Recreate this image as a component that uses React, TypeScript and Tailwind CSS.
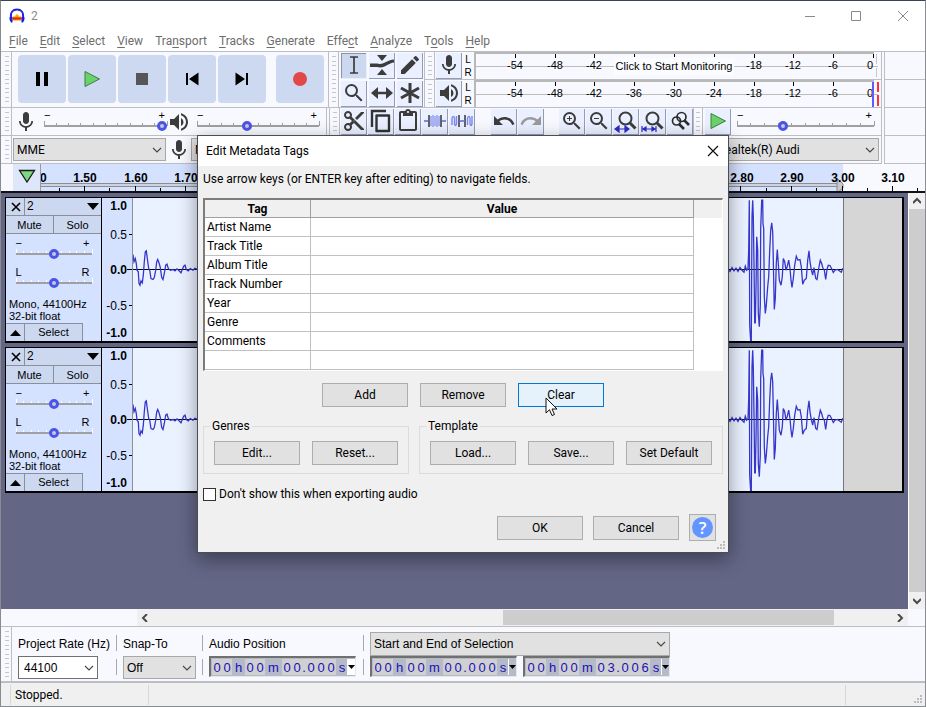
import React from "react";
import {
  MdMic, MdVolumeUp, MdEdit, MdContentCut, MdContentPaste,
  MdUndo, MdRedo, MdZoomIn, MdZoomOut, MdSearch,
} from "react-icons/md";

const ARIAL = "font-['Liberation_Sans',Arial,sans-serif]";

function Chevron() {
  return (
    <svg className="pointer-events-none absolute right-1 top-1/2 -translate-y-1/2" width="10" height="6" viewBox="0 0 10 6">
      <path d="M1 1l4 4 4-4" fill="none" stroke="#444" strokeWidth="1.1" />
    </svg>
  );
}

function Dropdown({ label, value, box, look }: { label: string; value: string; box: string; look: string }) {
  return (
    <div className={`relative ${box}`}>
      <select aria-label={label} className={`h-full w-full appearance-none overflow-hidden border outline-none ${look}`}>
        <option>{value}</option>
      </select>
      <Chevron />
    </div>
  );
}

function Grabber({ box = "" }: { box?: string }) {
  return (
    <div className={`flex w-[10px] shrink-0 justify-center border-r border-[#bcbec4] py-1 ${box}`}>
      <div className="w-1 bg-[repeating-linear-gradient(#c4c6cc_0_1px,transparent_1px_5px,#c4c6cc_5px_6px,transparent_6px_9px)]" />
    </div>
  );
}

function ToolButton({ label, active = false, dim = false, children }: { label: string; active?: boolean; dim?: boolean; children: React.ReactNode }) {
  return (
    <button
      aria-label={label}
      className={`flex h-[26px] w-[26px] shrink-0 items-center justify-center overflow-hidden border-b border-r ${
        active ? "border-[#e8eefc] bg-[#ccd8f0] shadow-[inset_1px_1px_0_#8c94ac]" : "border-[#949cb4] bg-[#eaf0ff]"
      } ${dim ? "text-[#9a9a9a]" : "text-[#3c3c3c]"}`}
    >
      {children}
    </button>
  );
}

const THUMB =
  "[&::-webkit-slider-thumb]:h-[10px] [&::-webkit-slider-thumb]:w-[10px] [&::-webkit-slider-thumb]:appearance-none [&::-webkit-slider-thumb]:rounded-full [&::-webkit-slider-thumb]:border-[3px] [&::-webkit-slider-thumb]:border-[#4a55e8] [&::-webkit-slider-thumb]:bg-[#c8c8d8]";

function Slider({ label, value, box, left = "−", right = "+", tick = "#a0a0a0" }: { label: string; value: number; box: string; left?: string; right?: string; tick?: string }) {
  return (
    <div className={`${box} ${ARIAL} text-[11px] leading-[9px] text-black`}>
      <div className="flex justify-between pr-0.5">
        <span>{left}</span>
        <span>{right}</span>
      </div>
      <div className="relative flex h-3 items-center">
        <svg className="absolute inset-0 h-full w-full overflow-visible" shapeRendering="crispEdges">
          {[0, 10, 20, 30, 40, 50, 60, 70, 80, 90, 100].map((p) => (
            <line key={p} x1={`${p}%`} x2={`${p}%`} y1={p % 100 === 0 ? 1 : 3} y2="6" stroke={tick} />
          ))}
          <line x1="0" x2="100%" y1="6" y2="6" stroke="#a0a0a0" strokeWidth="2" />
        </svg>
        <input type="range" aria-label={label} defaultValue={value} className={`absolute inset-x-0 top-0 h-[11px] w-full appearance-none bg-transparent ${THUMB}`} />
      </div>
    </div>
  );
}

function PlayShape({ size }: { size: number }) {
  return (
    <svg width={size} height={size} viewBox="0 0 18 18">
      <path d="M2 1.5L16.5 9 2 16.5z" fill="#6bd26b" stroke="#3f7f45" strokeWidth="1" />
    </svg>
  );
}

function TransportButton({ label, children }: { label: string; children: React.ReactNode }) {
  return (
    <button aria-label={label} className="flex h-12 w-12 items-center justify-center rounded bg-[#ccd9f1] text-black">
      {children}
    </button>
  );
}

function Transport() {
  return (
    <div className="flex h-14 border-b border-r border-[#bcbec4]">
      <Grabber box="ml-px" />
      <div className="flex items-start gap-0.5 pl-1.5 pr-1 pt-[3px]">
        <TransportButton label="Pause">
          <svg width="14" height="16"><path d="M1 1h4v14H1zM9 1h4v14H9z" /></svg>
        </TransportButton>
        <TransportButton label="Play"><PlayShape size={18} /></TransportButton>
        <TransportButton label="Stop">
          <svg width="14" height="14"><rect x="1" y="1" width="12" height="12" fill="#565656" /></svg>
        </TransportButton>
        <TransportButton label="Skip to Start">
          <svg width="14" height="14"><path d="M1 1h2v12H1zM13.500 .5v13L4 7z" /></svg>
        </TransportButton>
        <TransportButton label="Skip to End">
          <svg width="14" height="14"><path d="M11 1h2v12h-2zM.5 .5v13L10 7z" /></svg>
        </TransportButton>
        <div className="w-1.5" />
        <TransportButton label="Record">
          <svg width="16" height="16"><circle cx="8" cy="8" r="7" fill="#e24848" /></svg>
        </TransportButton>
      </div>
    </div>
  );
}

function Tools() {
  return (
    <div className="flex h-14 border-b border-r border-[#bcbec4]">
      <Grabber />
      <div className="grid grid-cols-3 content-center gap-x-0.5 gap-y-0.5 pl-0.5 pr-px">
        <ToolButton label="Selection Tool" active>
          <svg width="14" height="20"><path d="M3 2h3.500L7 3l.5-1H11M7 3v14M3 18h3.500L7 17l.5 1H11" fill="none" stroke="#3c3c3c" strokeWidth="1.700" /></svg>
        </ToolButton>
        <ToolButton label="Envelope Tool">
          <svg width="24" height="22" fill="#3c3c3c"><path d="M7 1h10l-5 6zM7 21h10l-5-6zM0 9.500h7c7 2 10-4 17-4v3C18 9 15 15 7 13H0z" /></svg>
        </ToolButton>
        <ToolButton label="Draw Tool"><MdEdit size={24} className="shrink-0" /></ToolButton>
        <ToolButton label="Zoom Tool"><MdSearch size={24} className="shrink-0" /></ToolButton>
        <ToolButton label="Time Shift Tool">
          <svg width="22" height="14" fill="#3c3c3c"><path d="M0 7l7-6v4.700h8V1l7 6-7 6V8.300H7V13z" /></svg>
        </ToolButton>
        <ToolButton label="Multi Tool">
          <svg width="22" height="22"><path d="M11 1v20M2 6l18 10M20 6L2 16" stroke="#3c3c3c" strokeWidth="3" /></svg>
        </ToolButton>
      </div>
    </div>
  );
}

const DB_MARKS: [string, number][] = [
  ["-54", 41], ["-48", 81], ["-42", 120], ["-36", 160], ["-30", 200],
  ["-24", 240], ["-18", 280], ["-12", 319], ["-6", 359], ["0", 396],
];

function Meter({ label, icon, monitoring = false }: { label: string; icon: React.ReactNode; monitoring?: boolean }) {
  return (
    <div className="flex h-7 border-b border-[#bcbec4]">
      <Grabber />
      <div className="flex items-center pl-px"><ToolButton label={label}>{icon}</ToolButton></div>
      <div className={`flex w-3 flex-col items-center justify-center text-[10px] leading-[13px] ${ARIAL}`}>
        <span>L</span>
        <span>R</span>
      </div>
      <svg className={`h-[27px] min-w-0 flex-1 ${ARIAL} text-[11px]`} shapeRendering="crispEdges">
        <path d="M0 1H400M.5 0V27" stroke="#b8b8b8" strokeWidth="2" fill="none" />
        <path d="M0 14.500H404" stroke="#bdbdbd" fill="none" />
        {DB_MARKS.filter(([, x]) => !monitoring || x < 140 || x > 260).map(([t, x]) => (
          <g key={t}>
            <path d={`M${t === "0" ? 399 : x}.5 2v4`} stroke="#000" />
            <text x={x} y="17" textAnchor="middle">{t}</text>
          </g>
        ))}
        {monitoring ? (
          <>
            <path d="M160.500 2v3M200.500 2v3M240.500 2v3" stroke="#000" />
            <rect x="140" y="6" width="120" height="17" fill="#fbfcff" />
            <text x="200" y="18" textAnchor="middle">Click to Start Monitoring</text>
            <path d="M402.500 2v10M402.500 16v9" stroke="#c6c6c6" />
          </>
        ) : (
          <>
            <path d="M399 2v25" stroke="#5c5cff" strokeWidth="2" />
            <path d="M404 2v10M404 15v11" stroke="#ff3030" strokeWidth="2" />
          </>
        )}
      </svg>
    </div>
  );
}

function Mixer() {
  return (
    <div className="flex h-7 w-[329px] shrink-0 border-b border-r border-[#bcbec4] pr-0.5">
      <Grabber box="ml-px" />
      <div className="flex flex-1 items-center border-r border-[#bcbec4] pl-0.5 text-[#3c3c3c]">
        <MdMic size={24} className="shrink-0" />
        <Slider label="Recording Volume" value={100} box="ml-1.5 w-[123px]" />
        <MdVolumeUp size={24} className="shrink-0" />
        <Slider label="Playback Volume" value={40} box="ml-1.5 w-[122px]" />
      </div>
    </div>
  );
}

function LensWith({ children }: { children: React.ReactNode }) {
  return (
    <svg width="24" height="24" viewBox="0 0 24 24" className="shrink-0">
      <circle cx="11.500" cy="9.500" r="6" fill="none" stroke="#3c3c3c" strokeWidth="2" />
      <path d="M15.500 13.500l6 6" stroke="#3c3c3c" strokeWidth="3" />
      {children}
    </svg>
  );
}

function EditBar() {
  return (
    <div className="flex h-7 flex-1 items-center border-b border-[#bcbec4]">
      <Grabber box="h-full" />
      <div className="ml-px flex gap-px">
        <ToolButton label="Cut"><MdContentCut size={24} className="shrink-0" /></ToolButton>
        <ToolButton label="Copy">
          <svg width="24" height="24" className="shrink-0" fill="none" stroke="#333" strokeWidth="2.400"><path d="M3 18V2h14" /><path d="M7.500 6.500h12.500v15.500H7.500z" strokeLinejoin="round" /></svg>
        </ToolButton>
        <ToolButton label="Paste"><MdContentPaste size={24} className="shrink-0" /></ToolButton>
        <ToolButton label="Trim Audio">
          <svg width="22" height="16" fill="none"><path d="M0 8h4M18 8h4" stroke="#5b68dc" strokeWidth="1.500" /><path d="M5 2v12M17 2v12" stroke="#555" strokeWidth="1.800" /><path d="M7 3v10M9 2v12M11 3v10M13 2v12M15 3v10" stroke="#8792ee" strokeWidth="1.300" /></svg>
        </ToolButton>
        <ToolButton label="Silence Audio">
          <svg width="24" height="16" fill="none" className="shrink-0"><path d="M2 12V5q1.500-3 2.500 0v6q1 3 2 0V3M17.500 12V5q1.500-3 2.500 0v6q1 3 2 0V3" stroke="#7c88ee" strokeWidth="1.400" /><path d="M9 2v12M15 2v12" stroke="#555" strokeWidth="1.800" /><path d="M9 8h6" stroke="#5b68dc" strokeWidth="1.500" /></svg>
        </ToolButton>
      </div>
      <div className="ml-4 flex gap-px">
        <ToolButton label="Undo"><MdUndo size={24} className="shrink-0" /></ToolButton>
        <ToolButton label="Redo" dim><MdRedo size={24} className="shrink-0" /></ToolButton>
      </div>
      <div className="ml-[15px] flex gap-px">
        <ToolButton label="Zoom In"><MdZoomIn size={24} className="shrink-0" /></ToolButton>
        <ToolButton label="Zoom Out"><MdZoomOut size={24} className="shrink-0" /></ToolButton>
        <ToolButton label="Fit Selection">
          <LensWith><path d="M1 20h14M5 17l-4 3 4 3zM11 17l4 3-4 3z" fill="#2c2cc8" stroke="#2c2cc8" strokeWidth="1.200" /></LensWith>
        </ToolButton>
        <ToolButton label="Fit Project">
          <LensWith><path d="M1 17v6M15 17v6M2 20h12M5 18l-3 2 3 2zM11 18l3 2-3 2z" fill="#2c2cc8" stroke="#2c2cc8" strokeWidth="1.200" /></LensWith>
        </ToolButton>
        <ToolButton label="Zoom Toggle">
          <svg width="24" height="24" fill="none" stroke="#2c2c2c" className="shrink-0"><circle cx="8.500" cy="12" r="4" strokeWidth="1.700" /><circle cx="13.500" cy="8" r="4.500" strokeWidth="1.700" /><path d="M11 15l5 5M16 11l5 5" strokeWidth="2.600" /></svg>
        </ToolButton>
      </div>
      <Grabber box="h-full border-l border-l-[#bcbec4]" />
      <div className="ml-0.5"><ToolButton label="Play-at-Speed"><PlayShape size={18} /></ToolButton></div>
      <Slider label="Playback Speed" value={32} box="ml-1.5 w-[137px]" />
    </div>
  );
}

function DeviceBar() {
  return (
    <div className="flex h-7 items-center border-b border-[#bcbec4]">
      <Grabber box="ml-px h-full" />
      <Dropdown label="Audio Host" value="MME" box="ml-px h-[23px] w-[153px]" look="border-[#a8a8a8] bg-[#e1e1e1] pl-[3px] text-black" />
      <MdMic size={24} className="ml-px shrink-0 text-[#3c3c3c]" />
      <Dropdown label="Recording Device" value="Microphone (Realtek(R) Audi" box="h-[23px] flex-1" look="border-[#a8a8a8] bg-[#e1e1e1] pl-[3px] text-black" />
      <MdVolumeUp size={24} className="mx-0.5 shrink-0 text-[#3c3c3c]" />
      <Dropdown label="Playback Device" value="Speakers (Realtek(R) Audi" box="mr-0.5 h-[23px] w-[222px]" look="border-[#a8a8a8] bg-[#e1e1e1] pl-[3px] text-black" />
    </div>
  );
}

const rulerX = (t: number) => Math.round((t - 1.5) * 505) + 43;
const RULER = Array.from({ length: 35 }, (_, i) => 1.45 + i * 0.05);
const LABELS: [string, number][] = [
  ["1.50", 44], ["1.60", 95], ["1.70", 145], ["2.80", 701], ["2.90", 751], ["3.00", 802], ["3.10", 852],
];

function TimeRuler() {
  return (
    <div className="flex h-[29px] border-b-2 border-[#111]">
      <div className="w-3" />
      <button aria-label="Pinned play head" className="flex w-7 items-center justify-center border-r border-[#9a9a9a] bg-[#dde6fb] pb-1">
        <svg width="18" height="14"><path d="M1.500 1.500h15L9 13z" fill="#7ed87e" stroke="#1a1a1a" strokeWidth="1.300" /></svg>
      </button>
      <svg className={`h-full min-w-0 flex-1 text-[12px] font-bold ${ARIAL}`}>
        <rect width="802" height="27" fill="#d4e1ff" />
        <rect x="-2" y="19.500" width="800" height="3" fill="#d0d4dc" stroke="#8a8d94" />
        <path d="M796 14l6 6v4l-6 5z" fill="#c8c8c8" stroke="#888" />
        <text x="-1" y="18">0</text>
        {RULER.map((t, i) => (
          <path key={i} d={`M${rulerX(t)}.5 ${i % 2 ? 22 : 24}V27`} stroke="#000" />
        ))}
        {LABELS.map(([t, x]) => (
          <text key={t} x={x} y="18" textAnchor="middle">{t}</text>
        ))}
      </svg>
    </div>
  );
}

// Vertices of the two hits in the clip, as x,y pairs in thirds of a pixel.
const HIT_A =
  "0,193 3,215 7,205 10,220 12,240 16,245 18,280 21,285 24,272 28,278 31,255 34,215 37,185 40,182 43,205 47,235 50,240 54,265 60,268 64,262 68,240 71,215 74,208 78,218 82,232 86,262 90,268 94,250 98,225 102,222 106,235 112,240 120,238 126,242 132,236 138,242 144,248 148,238 152,228 156,225 160,238 166,242 172,235 180,240 186,234 194,238 1780,238";
const HIT_B =
  "84,268 90,274 96,262 102,272 108,264 114,274 120,262 126,270 132,276 136,258 140,270 144,266 146,208 148,60 149,435 152,484 154,484 156,110 158,60 160,110 162,250 164,428 166,428 168,325 170,170 173,210 175,400 178,440 181,375 182,145 185,60 188,60 189,130 191,145 193,350 196,400 199,375 203,320 206,290 209,210 212,150 215,128 218,155 220,240 223,388 226,355 229,250 232,208 235,250 238,300 243,315 247,290 250,235 254,245 258,270 262,258 266,240 270,265 273,300 276,322 280,295 284,255 289,228 294,240 300,238 304,260 308,312 313,300 319,295 323,240 327,212 330,245 334,268 338,285 342,262 347,295 351,298 356,265 361,240 365,250 368,262 373,270 377,298 381,268 385,255 390,256 396,268 400,277 405,270 412,268 418,272 424,276 428,264";

const scale = (pts: string, dx: number, mid: number) =>
  pts.split(" ").map((p) => {
    const [x, y] = p.split(",").map(Number);
    return `${(x / 3 + dx).toFixed(1)},${((y - mid) / 3 + 71.5).toFixed(1)}`;
  }).join(" ");
const WAVE = `${scale(HIT_A, 0, 238)} ${scale(HIT_B, 567, 268)}`;

function Track() {
  const cell = "border-[#8b8f9c] bg-[#ccd8f0]";
  return (
    <div className={`flex h-[146px] border border-b-2 border-r-2 border-black ${ARIAL} text-[12px] text-black`}>
      <div className="flex w-24 shrink-0 flex-col border-r border-black bg-[#d4e1ff]">
        <div className="flex h-[18px] border-b border-[#8b8f9c]">
          <button aria-label="Close track" className={`flex w-[19px] items-center justify-center border-r pl-px ${cell}`}>
            <svg width="10" height="10"><path d="M1 1l8 8M9 1L1 9" stroke="#000" strokeWidth="1.600" /></svg>
          </button>
          <button className="flex flex-1 items-center justify-between bg-[#ccd8f0] px-0.5 leading-[17px]">
            2
            <svg width="12" height="7"><path d="M0 0h12L6 7z" /></svg>
          </button>
        </div>
        <div className="flex h-[18px] border-b border-[#8b8f9c] text-[11px] leading-[18px]">
          <button className={`flex-1 border-r ${cell}`}>Mute</button>
          <button className={`flex-1 ${cell}`}>Solo</button>
        </div>
        <Slider label="Gain" value={50} box="mx-auto mt-[5px] w-[76px]" tick="#fff" />
        <Slider label="Pan" value={50} box="mx-auto mt-2 w-[76px]" left="L" right="R" tick="#fff" />
        <div className="mt-[9px] pl-[3px] text-[11px] leading-3">
          Mono, 44100Hz
          <br />
          32-bit float
        </div>
        <div className="mt-auto flex h-[18px] text-[11px]">
          <button aria-label="Collapse" className={`flex w-[19px] items-center justify-center border-r border-t ${cell}`}>
            <svg width="11" height="6"><path d="M0 6h11L5.500 0z" /></svg>
          </button>
          <button className={`w-[58px] border-r border-t ${cell}`}>Select</button>
        </div>
      </div>
      <svg className="w-[31px] shrink-0 border-r border-[#8b8f9c] bg-[#d4e1ff] text-[12px]">
        <g textAnchor="end">
          <text x="25" y="12" className="font-bold">1.0</text>
          <text x="25" y="41">0.5</text>
          <text x="25" y="76" className="font-bold">0.0</text>
          <text x="25" y="112">-0.5</text>
          <text x="25" y="139" className="font-bold">-1.0</text>
        </g>
        <path d="M27 36.500h3M25 71.500h5M27 107.500h3" stroke="#000" />
      </svg>
      <svg className="h-full min-w-0 flex-1 bg-[#d6d6d6]">
        <rect width="710" height="143" fill="#ebf2ff" />
        <path d="M0 71.500H710" stroke="#000" />
        <polyline points={WAVE} fill="none" stroke="#3636cc" strokeWidth="1.300" />
        <path d="M710.500 0V143" stroke="#777" />
      </svg>
    </div>
  );
}

function ScrollArrow({ d, label, box }: { d: string; label: string; box: string }) {
  return (
    <button aria-label={label} className={`flex shrink-0 items-center justify-center bg-[#f0f0f0] ${box}`}>
      <svg width="8" height="8"><path d={d} fill="none" stroke="#4a4a4a" strokeWidth="2" /></svg>
    </button>
  );
}

function TrackArea() {
  return (
    <div className="flex min-h-0 flex-1">
      <div className="flex min-w-0 flex-1 flex-col gap-1 bg-[#636685] p-1">
        <Track />
        <Track />
      </div>
      <div className="flex w-[17px] flex-col border-l border-white bg-[#f0f0f0]">
        <ScrollArrow label="Scroll up" d="M0 6l4-4 4 4" box="h-4" />
        <div className="flex-1 bg-[#cdcdcd]" />
        <ScrollArrow label="Scroll down" d="M0 2l4 4 4-4" box="h-[17px]" />
      </div>
    </div>
  );
}

function HScroll() {
  return (
    <div className="flex h-[17px] pl-[136px] pr-[17px]">
      <div className="flex flex-1 bg-[#f0f0f0]">
        <ScrollArrow label="Scroll left" d="M6 0L2 4l4 4" box="w-4" />
        <div className="flex flex-1 py-px">
          <div className="flex-[350]" />
          <div className="flex-[331] bg-[#cdcdcd]" />
          <div className="flex-[58]" />
        </div>
        <ScrollArrow label="Scroll right" d="M2 0l4 4-4 4" box="w-4" />
      </div>
    </div>
  );
}

function TimeField({ label, h, m, s, ms, plain = false }: { label: string; h: string; m: string; s: string; ms: string; plain?: boolean }) {
  const digits = (v: string) =>
    v.split("").map((c, i) => <span key={i} className="w-[10px] bg-[#d0d0d0] text-center">{c}</span>);
  return (
    <div role="group" aria-label={label} className={`flex h-[21px] w-[147px] border-b border-l-2 border-r border-t-2 border-b-[#e8e8e8] border-l-[#707070] border-r-[#e8e8e8] border-t-[#707070] bg-[#b4bac8] py-px pl-px text-[13px] leading-[17px] text-[#1c10b8] ${ARIAL}`}>
      {digits(h)}
      <span className="w-[13px] text-center">h</span>
      {digits(m)}
      <span className="w-[17px] text-center">m</span>
      {digits(s)}
      <span className="w-1 bg-[#d0d0d0] text-center">.</span>
      {digits(ms)}
      <span className="w-[11px] pl-px text-center">s</span>
      <button aria-label={`${label} format`} className={`flex flex-1 items-center justify-center border-l border-white ${plain ? "bg-white" : ""}`}>
        <svg width="7" height="4" className="shrink-0"><path d="M0 0h7L3.500 4z" /></svg>
      </button>
    </div>
  );
}

function Divider() {
  return (
    <div className="flex flex-col gap-2 pt-2">
      <div className="h-4 w-px bg-[#a6a8ae]" />
      <div className="h-4 w-px bg-[#a6a8ae]" />
    </div>
  );
}

function SelectionBar() {
  return (
    <div className={`flex h-[57px] border-b-2 border-t border-[#bcbec4] text-[12px] text-black ${ARIAL}`}>
      <Grabber box="ml-px" />
      <div className="flex gap-1.5 pl-1.5">
        <div className="flex w-[92px] flex-col">
          <span className="whitespace-nowrap pt-[9px] leading-4">Project Rate (Hz)</span>
          <Dropdown label="Project Rate (Hz)" value="44100" box="mt-1 h-[23px] w-20" look="border-[#707070] bg-white pl-[5px]" />
        </div>
        <Divider />
        <div className="flex w-[73px] flex-col">
          <span className="pt-[9px] leading-4">Snap-To</span>
          <Dropdown label="Snap-To" value="Off" box="mt-1 h-[23px] w-[73px]" look="border-[#a8a8a8] bg-[#e1e1e1] pl-[3px]" />
        </div>
        <Divider />
        <div className="flex w-[148px] flex-col">
          <span className="pt-[9px] leading-4">Audio Position</span>
          <div className="mt-1"><TimeField label="Audio Position" h="00" m="00" s="00" ms="000" plain /></div>
        </div>
        <Divider />
        <div className="flex w-[300px] flex-col pt-[5px]">
          <Dropdown label="Selection mode" value="Start and End of Selection" box="h-[24px] w-full" look="border-[#a8a8a8] bg-[#e1e1e1] pl-[3px]" />
          <div className="flex justify-between">
            <TimeField label="Selection Start" h="00" m="00" s="00" ms="000" />
            <TimeField label="Selection End" h="00" m="00" s="03" ms="006" />
          </div>
        </div>
      </div>
    </div>
  );
}

function Grip() {
  return (
    <svg className="absolute bottom-0.5 right-0.5" width="9" height="9" fill="#bcbcbc">
      <path d="M6 0h2v2H6zM3 3h2v2H3zM6 3h2v2H6zM0 6h2v2H0zM3 6h2v2H3zM6 6h2v2H6z" />
    </svg>
  );
}

function PushButton({ hot = false, children }: { hot?: boolean; children: React.ReactNode }) {
  return (
    <button className={`h-6 w-[86px] border text-[12px] leading-5 text-black ${hot ? "border-[#0078d7] bg-[#e5f1fb]" : "border-[#adadad] bg-[#e1e1e1]"}`}>
      {children}
    </button>
  );
}

const TAGS = ["Artist Name", "Track Title", "Album Title", "Track Number", "Year", "Genre", "Comments", ""];

function MetadataDialog() {
  return (
    <div role="dialog" aria-label="Edit Metadata Tags" className="absolute left-1/2 top-[134px] w-[532px] -translate-x-1/2 border border-[#4a4c58] bg-[#f0f0f0] text-[12px] text-black shadow-[0_6px_18px_rgba(0,0,0,0.4)]">
      <div className="flex h-[30px] items-center justify-between bg-white pl-2 pr-[9px]">
        <h1>Edit Metadata Tags</h1>
        <button aria-label="Close">
          <svg width="12" height="12"><path d="M1 1l10 10M11 1L1 11" stroke="#111" strokeWidth="1.200" /></svg>
        </button>
      </div>
      <div className="flex flex-col px-[5px] pb-[11px]">
        <p className="pt-1 leading-[18px]">Use arrow keys (or ENTER key after editing) to navigate fields.</p>
        <div className="mt-[10px] border-b border-l-2 border-r border-t-2 border-b-white border-l-[#7c7c7c] border-r-white border-t-[#7c7c7c] bg-white">
          <div className="bg-[linear-gradient(#f0f0f0_18px,#fff_18px)]">
            <table className="w-[489px] table-fixed border-separate border-spacing-0">
              <thead>
                <tr className="h-[18px] leading-4">
                  <th className="w-[106px] border-b border-r border-[#a0a0a0] p-0">Tag</th>
                  <th className="border-b border-r border-[#a0a0a0] p-0">Value</th>
                </tr>
              </thead>
              <tbody>
                {TAGS.map((t) => (
                  <tr key={t} className="h-[19px] leading-4">
                    <td className="border-b border-r border-[#c0c0c0] py-0 pl-0.5 pr-0">{t}</td>
                    <td className="border-b border-r border-[#c0c0c0] p-0" />
                  </tr>
                ))}
              </tbody>
            </table>
          </div>
        </div>
        <div className="mt-3 flex justify-center gap-3">
          <PushButton>Add</PushButton>
          <PushButton>Remove</PushButton>
          <PushButton hot>Clear</PushButton>
        </div>
        <div className="mt-[11px] flex gap-[10px]">
          <fieldset className="flex gap-3 border border-[#dcdcdc] px-[10px] pb-2 pt-[7px]">
            <legend className="-ml-1 px-0.5 leading-4">Genres</legend>
            <PushButton>Edit...</PushButton>
            <PushButton>Reset...</PushButton>
          </fieldset>
          <fieldset className="flex gap-3 border border-[#dcdcdc] px-[10px] pb-2 pt-[7px]">
            <legend className="-ml-1 px-0.5 leading-4">Template</legend>
            <PushButton>Load...</PushButton>
            <PushButton>Save...</PushButton>
            <PushButton>Set Default</PushButton>
          </fieldset>
        </div>
        <label className="mt-[11px] flex items-center gap-[3px] leading-[18px]">
          <input type="checkbox" className="h-[13px] w-[13px] appearance-none border border-[#333] bg-white" />
          Don't show this when exporting audio
        </label>
        <div className="mt-[11px] flex items-center justify-end gap-[10px] pr-[7px]">
          <PushButton>OK</PushButton>
          <PushButton>Cancel</PushButton>
          <button aria-label="Help" className="flex h-[27px] w-[27px] items-center justify-center border border-[#adadad] bg-[#e1e1e1]">
            <span className="flex h-[21px] w-[21px] items-center justify-center rounded-full bg-[#6495ff] font-['Open_Sans',sans-serif] text-[17px] font-semibold leading-none text-white">?</span>
          </button>
        </div>
      </div>
      <Grip />
      <svg className="absolute left-[347px] top-[261px]" width="13" height="20">
        <path d="M1 1v15l3.500-3.300L7 18.500l2.500-1L7 12h5z" fill="#fff" stroke="#111" strokeWidth="1" />
      </svg>
    </div>
  );
}

const MENUS: [string, string, string][] = [
  ["", "F", "ile"], ["", "E", "dit"], ["", "S", "elect"], ["", "V", "iew"], ["Tra", "n", "sport"], ["", "T", "racks"],
  ["", "G", "enerate"], ["Effe", "c", "t"], ["", "A", "nalyze"], ["T", "o", "ols"], ["", "H", "elp"],
];

export default function App() {
  return (
    <div className="relative flex h-screen flex-col overflow-hidden border border-[#8a8c94] border-t-[#3b4654] bg-[#f8f9ff] font-[Roboto,sans-serif] text-[12px] text-black">
      <header className="flex h-[30px] shrink-0 items-center bg-white pl-2 text-[#8a8a8a]">
        <svg width="16" height="16" viewBox="0 0 16 16">
          <path d="M3.500 10l1-2 1.500.5L8 6l2 2.500 1.500-.5 1 2v2.500h-9z" fill="#ff9a00" stroke="#f8d060" strokeWidth="1" />
          <path d="M4 10.500h8" stroke="#e82010" strokeWidth="2" />
          <path d="M2 10C1 4 4 1.500 8 1.500S15 4 14 10" fill="none" stroke="#2020e0" strokeWidth="1.800" />
          <path d="M.5 9h3v5.500H2Q0 12 .5 9zM15.500 9h-3v5.500H14q2-2.500 1.500-5.500z" fill="#1818f0" />
        </svg>
        <span className="ml-1.5">2</span>
        <div className="ml-auto flex gap-9 pr-4">
          <button aria-label="Minimize"><svg width="10" height="10"><path d="M0 5.500h10" stroke="#8a8a8a" /></svg></button>
          <button aria-label="Maximize"><svg width="10" height="10"><path d="M.5.5h9v9h-9z" fill="none" stroke="#8a8a8a" /></svg></button>
          <button aria-label="Close window"><svg width="12" height="10"><path d="M1 0l10 10M11 0L1 10" stroke="#8a8a8a" /></svg></button>
        </div>
      </header>
      <nav className="flex h-5 shrink-0 items-center gap-3 bg-white pl-2 text-[#6d6d6d]">
        {MENUS.map(([a, b, c]) => (
          <button key={b + c}>{a}<u className="underline-offset-2">{b}</u>{c}</button>
        ))}
      </nav>
      <div className="flex shrink-0 border-t border-[#bcbec4]">
        <div className="min-w-0 flex-1">
          <div className="flex">
            <Transport />
            <Tools />
            <div className="min-w-0 flex-1">
              <Meter label="Recording meter" icon={<MdMic size={24} className="shrink-0" />} monitoring />
              <Meter label="Playback meter" icon={<MdVolumeUp size={24} className="shrink-0" />} />
            </div>
          </div>
          <div className="flex">
            <Mixer />
            <EditBar />
          </div>
          <DeviceBar />
        </div>
        <div className="w-11 border-l border-[#bcbec4] pl-0.5">
          <div className="border-l border-[#bcbec4]">
            <div className="h-7 border-b border-[#bcbec4]" />
            <div className="h-7 border-b border-[#bcbec4]" />
            <div className="h-7 border-b border-[#bcbec4]" />
            <div className="h-7 border-b border-[#bcbec4]" />
          </div>
        </div>
      </div>
      <TimeRuler />
      <TrackArea />
      <HScroll />
      <SelectionBar />
      <footer className="relative flex h-[23px] shrink-0 items-center bg-[#f0f0f0] pl-[9px]">
        <div className="flex h-5 w-[139px] items-center border-l border-r border-[#d8d8d8] pl-1">Stopped.</div>
        <div className="ml-auto h-5 w-20 border-l border-[#d8d8d8]" />
        <Grip />
      </footer>
      <MetadataDialog />
    </div>
  );
}
